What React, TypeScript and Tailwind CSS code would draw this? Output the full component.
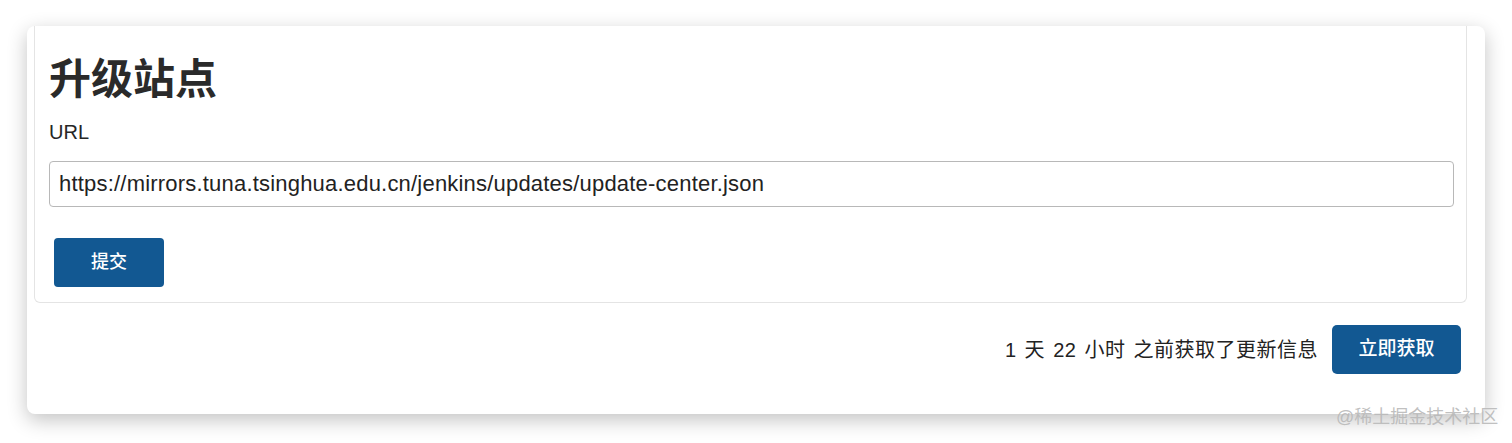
import React from "react";

const FONT =
  '"Liberation Sans", "Noto Sans CJK SC", "Noto Sans", sans-serif';

export default function App() {
  return (
    <div
      className="relative h-[443px] w-[1512px] overflow-hidden bg-white"
      style={{ fontFamily: FONT }}
    >
      <div className="pl-[27px] pt-[26px]">
        <div className="flex h-[388px] w-[1458px] flex-col rounded-lg bg-white shadow-[0_6px_20px_rgba(0,0,0,0.24)]">
          {/* upper panel */}
          <div className="ml-[7px] flex h-[277px] w-[1433px] flex-col rounded-b-md border-x border-b border-[#e4e4e4] px-[14px]">
            <h1 className="mt-[29px] text-[42px] font-semibold leading-[50px] text-[#2a2a2a]">
              升级站点
            </h1>
            <label className="mt-[15px] text-[20px] leading-[24px] text-[#262626]">
              URL
            </label>
            <input
              readOnly
              value="https://mirrors.tuna.tsinghua.edu.cn/jenkins/updates/update-center.json"
              className="mt-[17px] h-[46px] w-[1405px] rounded-[4px] border border-[#b8b8b8] px-[9px] text-[22px] tracking-[0.2px] text-[#222] outline-none"
              style={{ fontFamily: FONT }}
            />
            <div className="mt-[31px]">
              <button className="ml-[5px] h-[49px] w-[110px] rounded-[4px] bg-[#125892] text-[18px] font-medium text-white">
                提交
              </button>
            </div>
          </div>

          {/* bottom row */}
          <div className="mt-[22px] flex items-center justify-end gap-[14px] pr-[24px]">
            <span className="text-[20px] tracking-[0.5px] text-[#222] [word-spacing:2px]">
              1 天 22 小时 之前获取了更新信息
            </span>
            <button className="h-[49px] w-[129px] rounded-[5px] bg-[#125892] text-[19px] font-medium text-white">
              立即获取
            </button>
          </div>
        </div>
      </div>

      <div className="absolute left-[1336px] top-[404px] text-[18px] leading-[26px] text-[#b8b8b8]/90">
        @稀土掘金技术社区
      </div>
    </div>
  );
}
